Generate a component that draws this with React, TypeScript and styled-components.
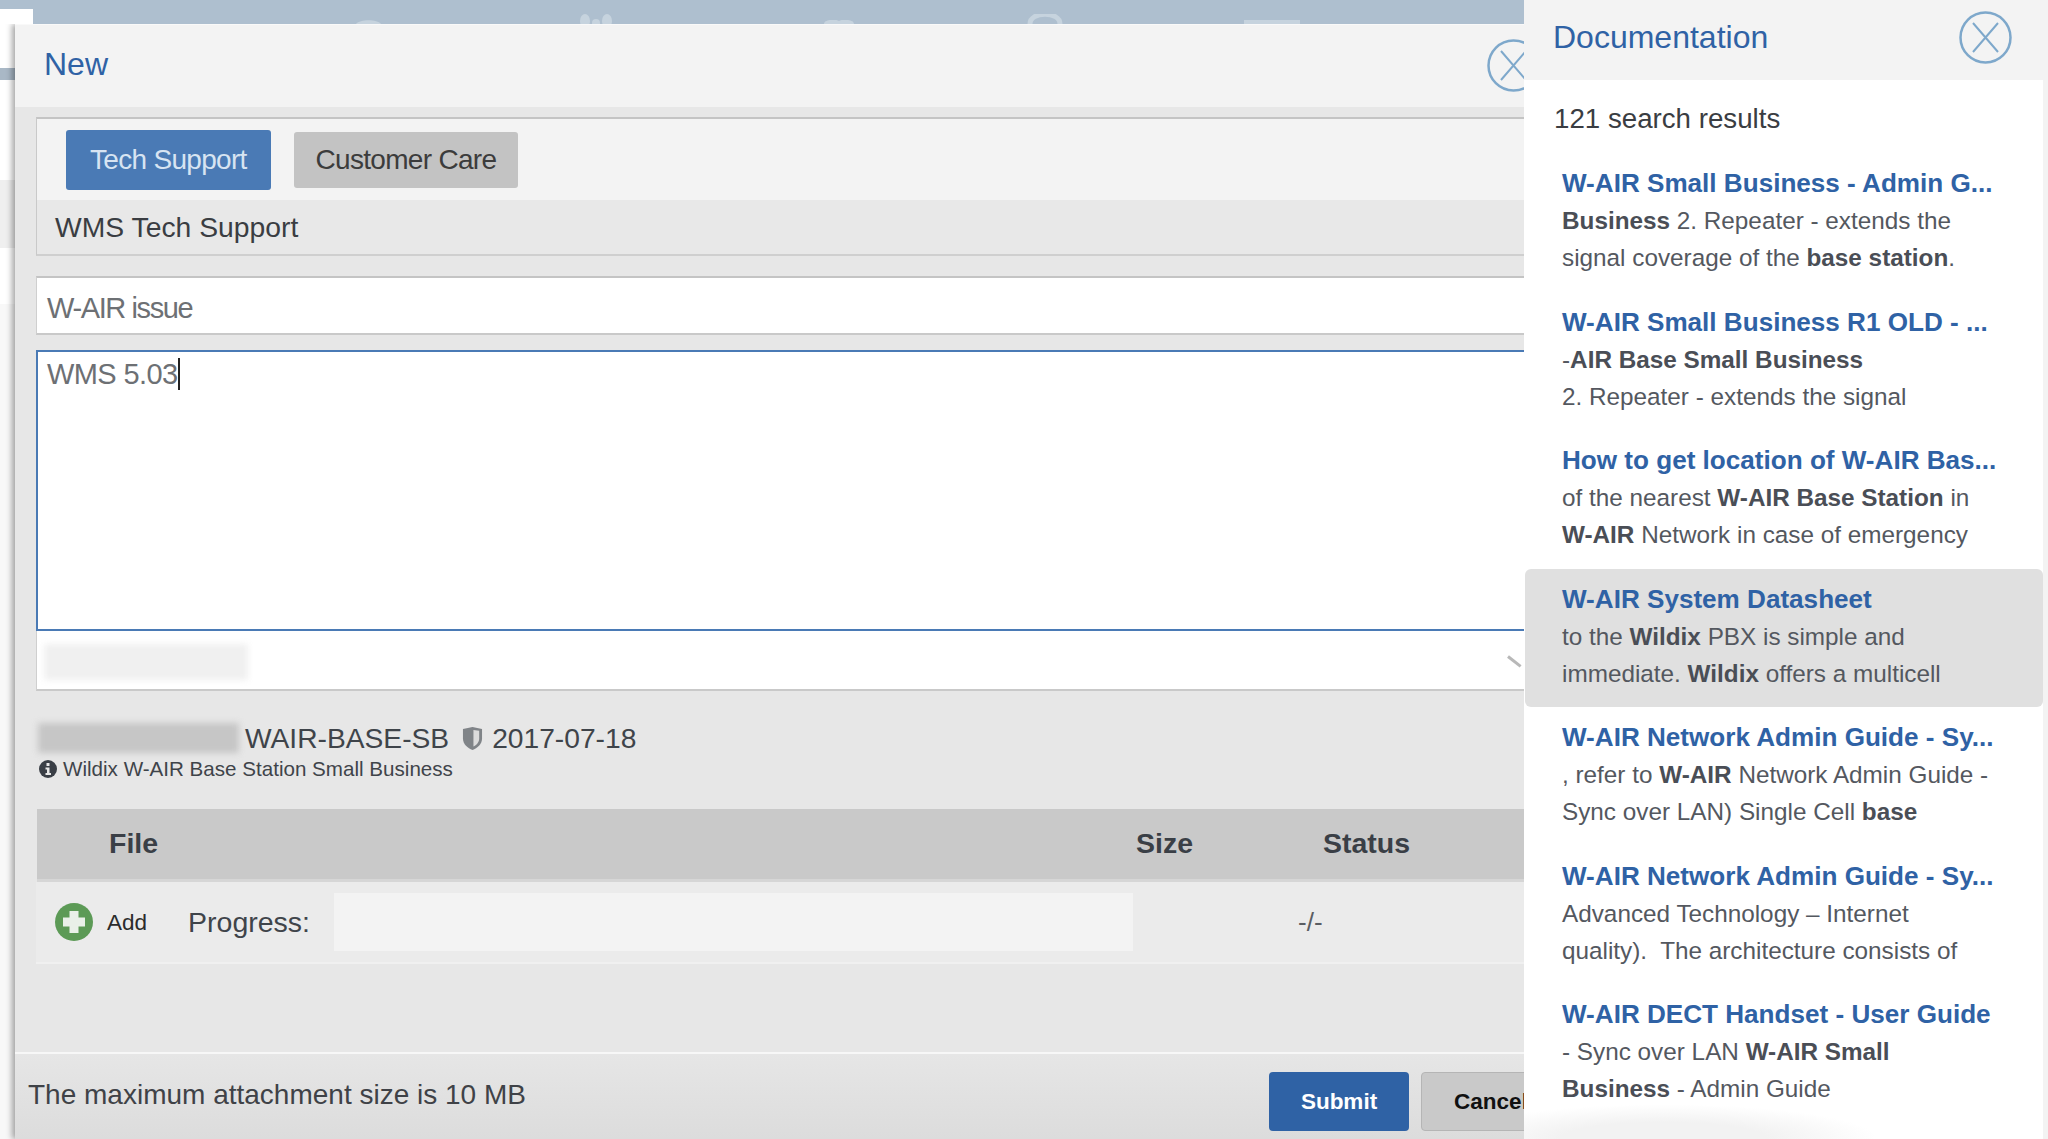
import React from "react"
import styled, { createGlobalStyle } from "styled-components"

const Global = createGlobalStyle`
  html, body { margin: 0; padding: 0; background: #fff; }
  body { font-family: "Liberation Sans", Arial, sans-serif; }
`

const Page = styled.div`
  position: relative;
  width: 2048px;
  height: 1139px;
  overflow: hidden;
  background: #fff;
`

const TopBand = styled.div`
  height: 24px;
  background: #aebfcf;
  display: flex;
  align-items: flex-end;
`

const BandIcon = styled.svg<{ $left: number }>`
  display: block;
  flex: none;
  margin-left: ${(p) => p.$left}px;
`

const LeftEdge = styled.div`
  width: 15px;
  height: 1115px;
  display: flex;
  flex-direction: column;
`

const EdgeSegment = styled.div<{ $h: number; $bg: string }>`
  height: ${(p) => p.$h}px;
  flex: none;
  background: ${(p) => p.$bg};
`

const Corner = styled.div`
  position: absolute;
  left: 0;
  top: 9px;
  width: 33px;
  height: 15px;
  background: #fff;
`

const Modal = styled.div`
  position: absolute;
  left: 15px;
  top: 24px;
  width: 1509px;
  height: 1115px;
  background: #e7e7e7;
  box-shadow: -3px 0 6px rgba(0, 0, 0, 0.35);
  clip-path: inset(0 0 0 -10px);
  display: flex;
  flex-direction: column;
`

const ModalHeader = styled.header`
  height: 83px;
  flex: none;
  background: #f3f3f3;
  border-top: 1px solid #f9f9f9;
  display: flex;
  align-items: center;
  justify-content: space-between;
  padding: 0 0 0 29px;
  box-sizing: border-box;
`

const ModalTitle = styled.h1`
  margin: 0 0 4px;
  font-size: 32px;
  font-weight: 400;
  color: #2f62a5;
`

const ModalBody = styled.div`
  flex: 1;
  padding: 10px 0 0 21px;
  display: flex;
  flex-direction: column;
`

const TabsBox = styled.section`
  height: 139px;
  flex: none;
  box-sizing: border-box;
  border: 1px solid #c9c9c9;
  border-top: 2px solid #c4c4c4;
  border-right: 0;
  border-bottom: 2px solid #cfcfcf;
  background: #f3f3f3;
  display: flex;
  flex-direction: column;
`

const Tabs = styled.div`
  height: 81px;
  flex: none;
  display: flex;
  align-items: center;
  gap: 23px;
  padding-left: 29px;
  box-sizing: border-box;
`

const Tab = styled.div<{ $active?: boolean }>`
  height: ${(p) => (p.$active ? 60 : 56)}px;
  padding: 0 ${(p) => (p.$active ? 24 : 22)}px;
  display: flex;
  align-items: center;
  border-radius: 3px;
  font-size: 28px;
  letter-spacing: -0.7px;
  background: ${(p) => (p.$active ? "#4a7ab5" : "#c3c3c3")};
  color: ${(p) => (p.$active ? "#d7e4f2" : "#3c3c3c")};
`

const TeamRow = styled.div`
  flex: 1;
  display: flex;
  align-items: center;
  padding-left: 18px;
  background: #e8e8e8;
  font-size: 28.3px;
  color: #3a3d42;
`

const SubjectBox = styled.div`
  margin-top: 20px;
  height: 59px;
  flex: none;
  box-sizing: border-box;
  background: #fff;
  border: 1px solid #cfcfcf;
  border-top: 2px solid #c4c4c4;
  border-bottom: 2px solid #c9c9c9;
  border-right: 0;
  padding: 6px 0 0 10px;
  display: flex;
  align-items: center;
  font-size: 29px;
  letter-spacing: -1.4px;
  color: #6d7074;
`

const MessageBox = styled.div`
  margin-top: 15px;
  height: 281px;
  flex: none;
  box-sizing: border-box;
  background: #fff;
  border: 2px solid #4a7ab5;
  border-right: 0;
  padding: 4px 0 0 9px;
  font-size: 29px;
  letter-spacing: -0.6px;
  color: #6d7074;
  line-height: 36px;
`

const Caret = styled.span`
  display: inline-block;
  width: 2px;
  height: 32px;
  background: #222;
  vertical-align: -6px;
`

const SelectBox = styled.div`
  position: relative;
  height: 60px;
  flex: none;
  box-sizing: border-box;
  background: #fff;
  border-left: 1px solid #cfcfcf;
  border-bottom: 2px solid #c9c9c9;
  display: flex;
  align-items: center;
  padding: 4px 0 0 7px;
`

const BlurBar = styled.div<{ $w: number; $h: number; $bg: string }>`
  width: ${(p) => p.$w}px;
  height: ${(p) => p.$h}px;
  flex: none;
  background: ${(p) => p.$bg};
  filter: blur(3px);
`

const Chevron = styled.div`
  position: absolute;
  right: 0;
  top: 24px;
  width: 16px;
  height: 3px;
  background: #b8b8b8;
  transform: rotate(38deg);
  transform-origin: left center;
`

const DeviceRow = styled.div`
  margin-top: 31px;
  padding-left: 2px;
  display: flex;
  align-items: center;
  font-size: 28.2px;
  color: #3f444a;
  line-height: 32px;
`

const DeviceCode = styled.span`
  margin: 0 13px 0 6px;
`

const DeviceDate = styled.span`
  margin-left: 9px;
`

const InfoRow = styled.div`
  padding-left: 3px;
  margin-top: 2px;
  display: flex;
  align-items: center;
  gap: 6px;
  font-size: 20.6px;
  line-height: 26px;
  color: #3f444a;
`

const TableHead = styled.div`
  margin-top: 27px;
  height: 68px;
  flex: none;
  background: #c9c9c9;
  border-bottom: 3px solid #d6d6d6;
  display: flex;
  align-items: center;
  padding-bottom: 2px;
  box-sizing: content-box;
  font-size: 28.5px;
  font-weight: 700;
  color: #3a3f46;
  margin-left: 1px;
`

const HeadCell = styled.div<{ $w: number }>`
  width: ${(p) => p.$w}px;
  flex: none;
`

const FileRow = styled.div`
  height: 82px;
  flex: none;
  box-sizing: border-box;
  background: #ebebeb;
  border-bottom: 2px solid #f0f0f0;
  display: flex;
  align-items: center;
`

const AddButton = styled.div`
  width: 38px;
  height: 38px;
  margin-left: 19px;
  flex: none;
`

const AddLabel = styled.span`
  margin-left: 14px;
  padding-top: 2px;
  font-size: 22.5px;
  color: #2b2b2b;
`

const ProgressLabel = styled.span`
  margin-left: 41px;
  font-size: 28.5px;
  color: #3f444a;
`

const ProgressTrack = styled.div`
  margin-left: 24px;
  width: 799px;
  height: 58px;
  flex: none;
  background: #f3f3f3;
`

const SizeValue = styled.span`
  margin-left: 165px;
  font-size: 26px;
  color: #5a5d62;
`

const Footer = styled.footer`
  margin-top: auto;
  height: 87px;
  flex: none;
  margin-left: -21px;
  border-top: 2px solid #f7f7f7;
  background: linear-gradient(to bottom, #e6e6e6, #dcdcdc);
  display: flex;
  align-items: center;
  box-sizing: border-box;
`

const FooterNote = styled.span`
  margin-left: 13px;
  margin-bottom: 3px;
  font-size: 28px;
  color: #3f4247;
`

const FooterActions = styled.div`
  margin-left: auto;
  width: 255px;
  flex: none;
  display: flex;
  gap: 12px;
  overflow: hidden;
  margin-bottom: -10px;
`

const FooterButton = styled.div<{ $primary?: boolean }>`
  width: 140px;
  height: 59px;
  flex: none;
  box-sizing: border-box;
  border-radius: 4px;
  display: flex;
  align-items: center;
  justify-content: center;
  font-size: 22.5px;
  font-weight: 700;
  background: ${(p) => (p.$primary ? "#2f62a5" : "#c9c9c9")};
  color: ${(p) => (p.$primary ? "#fff" : "#111")};
  border: ${(p) => (p.$primary ? "0" : "1px solid #b5b5b5")};
`

const DocPanel = styled.aside`
  position: absolute;
  top: 0;
  left: 1524px;
  width: 524px;
  height: 1139px;
  background: linear-gradient(to right, #fff 519px, #f3f3f3 519px);
  display: flex;
  flex-direction: column;
`

const DocHeader = styled.header`
  height: 80px;
  flex: none;
  background: #f3f3f3;
  display: flex;
  align-items: center;
  justify-content: space-between;
  padding: 0 36px 6px 29px;
  box-sizing: border-box;
`

const DocTitle = styled.h2`
  margin: 0;
  font-size: 32px;
  font-weight: 400;
  color: #2f62a5;
`

const CloseIcon = styled.svg`
  width: 53px;
  height: 53px;
  flex: none;
`

const ModalClose = styled(CloseIcon)`
  margin-top: -2px;
  margin-right: -16px;
`

const ResultCount = styled.div`
  padding: 20px 0 0 30px;
  height: 62px;
  box-sizing: border-box;
  font-size: 27.7px;
  line-height: 37px;
  color: #3a3d42;
`

const ResultList = styled.div`
  margin-top: 11px;
  width: 519px;
  display: flex;
  flex-direction: column;
`

const ResultItem = styled.div<{ $active?: boolean }>`
  height: 138.5px;
  flex: none;
  box-sizing: border-box;
  padding: 12px 8px 0 37px;
  border-radius: 6px;
  background: ${(p) => (p.$active ? "#e0e0e0" : "transparent")};
  margin-left: 1px;
`

const ResultTitle = styled.div`
  font-size: 26.1px;
  line-height: 37px;
  font-weight: 700;
  color: #2f62a5;
  white-space: nowrap;
`

const ResultText = styled.div`
  font-size: 24.3px;
  line-height: 37px;
  color: #54585f;
  white-space: pre;

  b {
    color: #4a4e56;
  }
`

const BottomFade = styled.div`
  position: absolute;
  left: 0;
  bottom: 0;
  width: 350px;
  height: 34px;
  background: radial-gradient(ellipse at 40% 100%, #f2f2f2 35%, rgba(255, 255, 255, 0) 72%);
`

const results: { title: string; lines: React.ReactNode[]; active?: boolean }[] = [
  {
    title: "W-AIR Small Business - Admin G...",
    lines: [
      <><b>Business</b> 2. Repeater - extends the</>,
      <>signal coverage of the <b>base station</b>.</>,
    ],
  },
  {
    title: "W-AIR Small Business R1 OLD - ...",
    lines: [<>-<b>AIR Base Small Business</b></>, <>2. Repeater - extends the signal</>],
  },
  {
    title: "How to get location of W-AIR Bas...",
    lines: [
      <>of the nearest <b>W-AIR Base Station</b> in</>,
      <><b>W-AIR</b> Network in case of emergency</>,
    ],
  },
  {
    title: "W-AIR System Datasheet",
    active: true,
    lines: [
      <>to the <b>Wildix</b> PBX is simple and</>,
      <>immediate. <b>Wildix</b> offers a multicell</>,
    ],
  },
  {
    title: "W-AIR Network Admin Guide - Sy...",
    lines: [
      <>, refer to <b>W-AIR</b> Network Admin Guide -</>,
      <>Sync over LAN) Single Cell <b>base</b></>,
    ],
  },
  {
    title: "W-AIR Network Admin Guide - Sy...",
    lines: [<>Advanced Technology – Internet</>, <>quality).  The architecture consists of</>],
  },
  {
    title: "W-AIR DECT Handset - User Guide",
    lines: [<>- Sync over LAN <b>W-AIR Small</b></>, <><b>Business</b> - Admin Guide</>],
  },
]

const CloseGlyph = () => (
  <>
    <circle cx="26.5" cy="26.5" r="25" fill="none" stroke="#7ea8cb" strokeWidth="2.5" />
    <path d="M14 12 L39 41 M39 12 L14 41" fill="none" stroke="#7ea8cb" strokeWidth="2" />
  </>
)

export default function App() {
  return (
    <Page>
      <Global />
      <TopBand>
        <BandIcon $left={356} width="25" height="4" viewBox="0 0 25 4">
          <path d="M0 4 C4 -1 21 -1 25 4 Z" fill="#c6d3de" />
        </BandIcon>
        <BandIcon $left={199} width="32" height="10" viewBox="0 0 32 10">
          <ellipse cx="5" cy="7" rx="5" ry="7" fill="#c6d3de" />
          <ellipse cx="16" cy="9" rx="4" ry="4" fill="#c6d3de" />
          <ellipse cx="27" cy="7" rx="5" ry="7" fill="#c6d3de" />
        </BandIcon>
        <BandIcon $left={212} width="30" height="4" viewBox="0 0 30 4">
          <path d="M0 4 C0 -1 13 -1 15 1 C17 -1 30 -1 30 4 Z" fill="#c6d3de" />
        </BandIcon>
        <BandIcon $left={172} width="38" height="10" viewBox="0 0 38 10">
          <path d="M4 10 C4 -3 34 -3 34 10" fill="none" stroke="#c6d3de" strokeWidth="5" />
        </BandIcon>
        <BandIcon $left={180} width="56" height="4" viewBox="0 0 56 4">
          <rect width="56" height="4" fill="#c6d3de" />
        </BandIcon>
      </TopBand>
      <LeftEdge>
        <EdgeSegment $h={44} $bg="#fff" />
        <EdgeSegment $h={12} $bg="#a9b8c6" />
        <EdgeSegment $h={100} $bg="#fff" />
        <EdgeSegment $h={68} $bg="#efefef" />
        <EdgeSegment $h={56} $bg="#fff" />
        <EdgeSegment $h={835} $bg="#f8f8f8" />
      </LeftEdge>
      <Corner />

      <Modal>
        <ModalHeader>
          <ModalTitle>New</ModalTitle>
          <ModalClose viewBox="0 0 53 53">
            <CloseGlyph />
          </ModalClose>
        </ModalHeader>
        <ModalBody>
          <TabsBox>
            <Tabs>
              <Tab $active>Tech Support</Tab>
              <Tab>Customer Care</Tab>
            </Tabs>
            <TeamRow>WMS Tech Support</TeamRow>
          </TabsBox>
          <SubjectBox>W-AIR issue</SubjectBox>
          <MessageBox>
            WMS 5.03<Caret />
          </MessageBox>
          <SelectBox>
            <BlurBar $w={204} $h={36} $bg="#f0f0f0" />
            <Chevron />
          </SelectBox>
          <DeviceRow>
            <BlurBar $w={201} $h={30} $bg="#c6c6c6" />
            <DeviceCode>WAIR-BASE-SB</DeviceCode>
            <svg width="21" height="25" viewBox="0 0 22 26">
              <path d="M1 3 L11 1 L21 3 V13 C21 19 16 23 11 25 C6 23 1 19 1 13 Z" fill="#808488" />
              <path d="M12 4 L18 5 V13 C18 17 15 20 12 21.5 Z" fill="#dcdcdc" />
            </svg>
            <DeviceDate>2017-07-18</DeviceDate>
          </DeviceRow>
          <InfoRow>
            <svg width="18" height="18" viewBox="0 0 18 18">
              <circle cx="9" cy="9" r="9" fill="#3a3f46" />
              <rect x="7.5" y="3" width="3" height="3" fill="#e7e7e7" />
              <path d="M6.5 7.5 H10.5 V13 H12 V15 H6.5 V13 H8 V9.5 H6.5 Z" fill="#e7e7e7" />
            </svg>
            Wildix W-AIR Base Station Small Business
          </InfoRow>
          <TableHead>
            <HeadCell $w={72} />
            <HeadCell $w={1027}>File</HeadCell>
            <HeadCell $w={187}>Size</HeadCell>
            <HeadCell $w={100}>Status</HeadCell>
          </TableHead>
          <FileRow>
            <AddButton>
              <svg width="38" height="38" viewBox="0 0 38 38">
                <circle cx="19" cy="19" r="19" fill="#5c9a56" />
                <path d="M14.5 8 H23.5 V14.5 H30 V23.5 H23.5 V30 H14.5 V23.5 H8 V14.5 H14.5 Z" fill="#e9f0e8" />
              </svg>
            </AddButton>
            <AddLabel>Add</AddLabel>
            <ProgressLabel>Progress:</ProgressLabel>
            <ProgressTrack />
            <SizeValue>-/-</SizeValue>
          </FileRow>
          <Footer>
            <FooterNote>The maximum attachment size is 10 MB</FooterNote>
            <FooterActions>
              <FooterButton $primary>Submit</FooterButton>
              <FooterButton>Cancel</FooterButton>
            </FooterActions>
          </Footer>
        </ModalBody>
      </Modal>

      <DocPanel>
        <DocHeader>
          <DocTitle>Documentation</DocTitle>
          <CloseIcon viewBox="0 0 53 53">
            <CloseGlyph />
          </CloseIcon>
        </DocHeader>
        <ResultCount>121 search results</ResultCount>
        <ResultList>
          {results.map((r, i) => (
            <ResultItem key={i} $active={r.active}>
              <ResultTitle>{r.title}</ResultTitle>
              {r.lines.map((l, j) => (
                <ResultText key={j}>{l}</ResultText>
              ))}
            </ResultItem>
          ))}
        </ResultList>
        <BottomFade />
      </DocPanel>
    </Page>
  )
}
